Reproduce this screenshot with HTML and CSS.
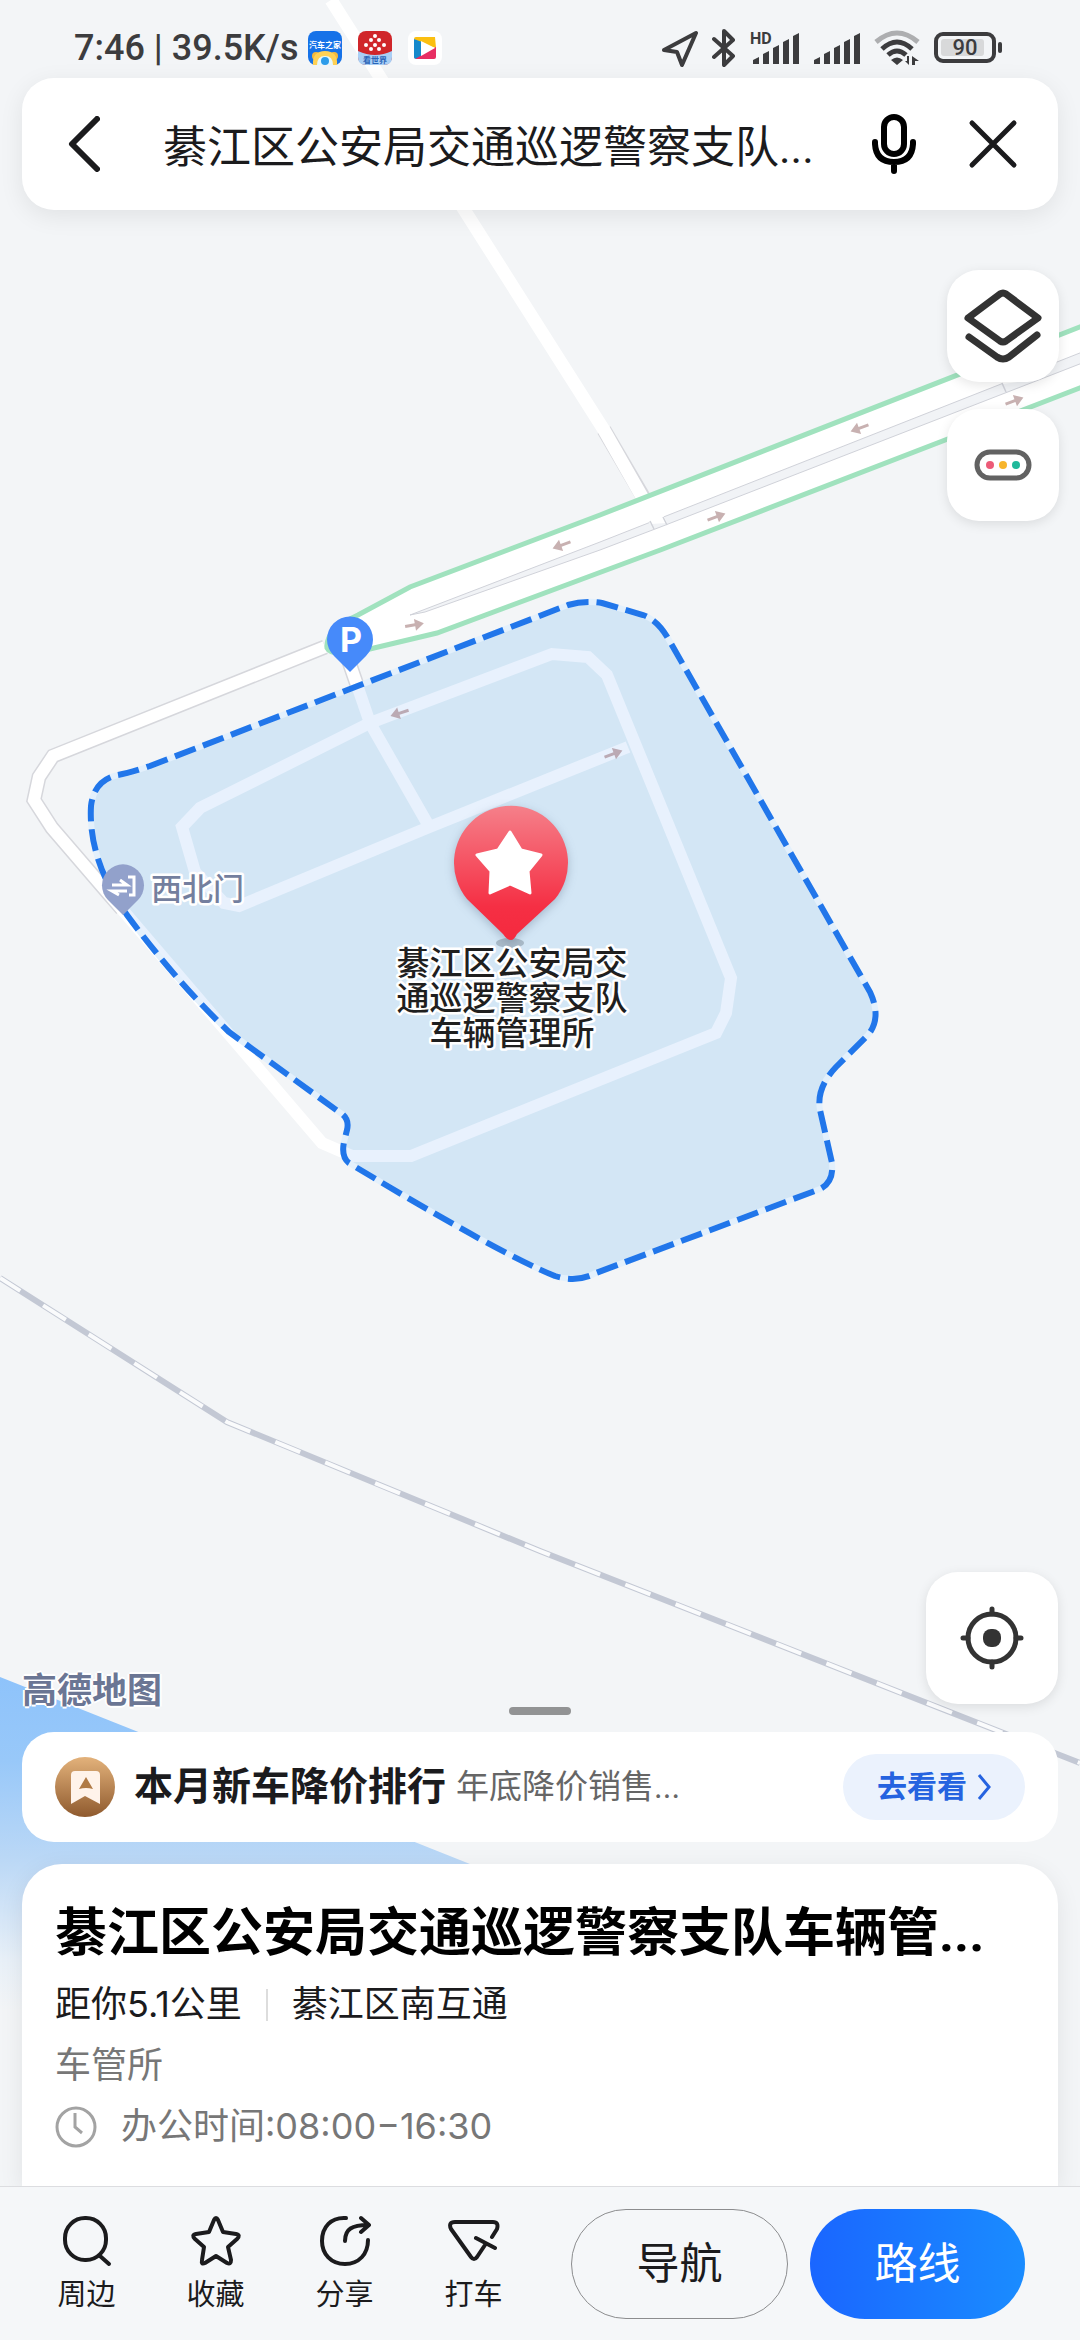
FILE: index.html
```
<!DOCTYPE html>
<html lang="zh-CN">
<head>
    <meta charset="UTF-8">
    <meta name="viewport" content="width=device-width, initial-scale=1.0">
    <title>高德地图</title>
    <link rel="stylesheet" href="styles.css">
</head>
<body>
    <svg class="map" viewBox="0 0 1080 2340" preserveAspectRatio="xMidYMin slice">
        <defs>
            <path id="area" d="M118 775 Q130 773 150 766 L568 605 Q585 600 602 603 L643 615 Q658 620 669 640 L870 992 Q882 1018 868 1035 L836 1067 Q816 1088 820 1110 L832 1163 Q834 1182 820 1189 L596 1273 Q577 1283 555 1276 Q500 1254 349 1163 Q341 1157 344 1142 L347 1130 Q350 1118 339 1112 L229 1032 Q175 980 127 915 Q88 860 91 806 Q94 780 118 775 Z"/>
            <clipPath id="areaClip"><use href="#area"/></clipPath>
            <g id="roads">
                <path d="M325 647 L53 756 L39 777 L34 800 L52 828 L108 893 L322 1143 L352 1156 L411 1156 L716 1033 L726 1013 L731 978 L607 675 L588 657 L552 654 L370 723 L200 808 L182 827 L195 872 L224 903 L239 906 L427 828 L628 747"/>
                <path d="M345 650 L370 723 L430 828"/>
            </g>
            <path id="arrow" d="M-9 -1.500 H1 V-6 L10 0 L1 6 V1.500 H-9 Z"/>
            <linearGradient id="water" x1="0" y1="1677" x2="0" y2="2010" gradientUnits="userSpaceOnUse">
                <stop offset="0" stop-color="#8ec3fb"/>
                <stop offset="0.250" stop-color="#98c8f9"/>
                <stop offset="0.550" stop-color="#bbd8f6"/>
                <stop offset="0.850" stop-color="#e8f0f8"/>
                <stop offset="1" stop-color="#f3f5f7"/>
            </linearGradient>
            <linearGradient id="pin" x1="0" y1="0" x2="0" y2="1">
                <stop offset="0" stop-color="#f5808a"/>
                <stop offset="0.750" stop-color="#f52f44"/>
                <stop offset="1" stop-color="#f5293e"/>
            </linearGradient>
        </defs>

        <path d="M0 1677 L480 1868 L600 2010 H0 Z" fill="url(#water)"/>

        <!-- minor road from the top -->
        <path class="road-line" d="M604 430 L645 500"/>
        <path d="M331 0 L604 430 L645 502" stroke="#fff" stroke-width="13" fill="none"/>

        <!-- railway -->
        <path d="M0 1278 L227 1422 L540 1551 L1080 1763" stroke="#c3c8d4" stroke-width="6" fill="none"/>
        <path class="rail-gap" d="M0 1278 L227 1422 L540 1551 L1080 1763"/>

        <path class="road-line" d="M325 647 L53 756 L39 777 L34 800 L52 828 L108 893 L122 909 M345 650 L370 723"/>
        <use href="#roads" class="road-fill"/>
        <use href="#area" fill="#d3e6f5"/>
        <g clip-path="url(#areaClip)"><use href="#roads" class="road-inner"/></g>

        <!-- main road -->
        <path class="highway" d="M1090 323 L600 515 L410 587 L358 615 Q325 630 327 648 Q332 659 374 648 L437 633 L663 549 L1090 384 Z"/>
        <path class="median" d="M410 615 L600 542 L1090 349 V360 L663 526 L600 550 L425 612 Z"/>
        <path d="M650 524 L646 513 L660 508 L667 523 Z M1003 384 L1000 375 L1030 370 L1032 380 Z" fill="#fff"/>
        <path d="M650 521 L654 529 M663 517 L667 525 M1002 383 L1006 392" stroke="#d0d2d9" stroke-width="1.500"/>

        <g fill="#c8b1b1">
            <use href="#arrow" transform="translate(716 517) rotate(-20)"/>
            <use href="#arrow" transform="translate(1014 401) rotate(-20)"/>
            <use href="#arrow" transform="translate(860 428) rotate(160)"/>
            <use href="#arrow" transform="translate(562 545) rotate(160)"/>
            <use href="#arrow" transform="translate(414 625) rotate(-10)"/>
        </g>
        <g fill="#bbaab4">
            <use href="#arrow" transform="translate(400 713) rotate(162)"/>
            <use href="#arrow" transform="translate(613 754) rotate(-20)"/>
        </g>

        <use href="#area" class="area-halo"/>
        <use href="#area" class="area-border"/>

        <!-- parking pin -->
        <path d="M350 672 L334 656 A23 23 0 1 1 366 656 Z" fill="#468afa"/>
        <text class="pin-letter" x="351" y="652">P</text>

        <!-- gate pin -->
        <path d="M123 915 L108 900 A21 21 0 1 1 138 900 Z" fill="#92a1cb"/>
        <path d="M112 885 H127 L120 880 M127 891 H112 L119 895 M128 877 H134 V895 H129" stroke="#fff" stroke-width="3" fill="none"/>
        <text class="gate-label" x="151" y="900">西北门</text>

        <!-- destination -->
        <ellipse cx="510" cy="943" rx="14" ry="5" fill="#a9bac8"/>
        <path class="dest-pin" d="M511 940 Q507 940 503 934 L467 899 A57 57 0 1 1 555 899 L517 934 Q514 940 511 940 Z" fill="url(#pin)"/>
        <path d="M510 832 L521 850 L541 855 L528 871 L530 893 L510 884 L490 893 L491 871 L477 855 L498 850 Z" fill="#fff" stroke="#fff" stroke-width="3" stroke-linejoin="round"/>
        <text class="dest-label" x="512" y="975">綦江区公安局交</text>
        <text class="dest-label" x="512" y="1010">通巡逻警察支队</text>
        <text class="dest-label" x="512" y="1045">车辆管理所</text>
    </svg>

    <div class="screen">
        <div class="status">
            <span class="status-text">7:46 | 39.5K/s</span>
            <div class="apps">
                <svg width="34" height="34" viewBox="0 0 34 34">
                    <rect width="34" height="34" rx="8" fill="#1672e8"/>
                    <text class="app-name" x="17" y="17" fill="#fff">汽车之家</text>
                    <circle cx="8" cy="25" r="4" fill="#f5b93c"/><circle cx="26" cy="25" r="4" fill="#f5b93c"/>
                    <path d="M5 34 Q4 20 17 20 Q30 20 29 34 Z" fill="#ffd155"/>
                    <path d="M9 34 Q9 25 17 25 Q25 25 25 34 Z" fill="#e5f8ff"/>
                    <circle cx="17" cy="30" r="4" fill="#2d9cea"/>
                </svg>
                <svg width="34" height="34" viewBox="0 0 34 34">
                    <rect width="34" height="34" rx="8" fill="#d0262a"/>
                    <path d="M0 20 Q17 28 34 20 V26 Q34 34 26 34 H8 Q0 34 0 26 Z" fill="#a9cff5"/>
                    <g fill="#fff"><circle cx="17" cy="5" r="2"/><circle cx="13" cy="9" r="2"/><circle cx="21" cy="9" r="2"/><circle cx="8" cy="14" r="2"/><circle cx="17" cy="14" r="2"/><circle cx="26" cy="14" r="2"/><circle cx="13" cy="18" r="2"/><circle cx="21" cy="18" r="2"/></g>
                    <text class="app-name" x="17" y="32" fill="#2b65b8">看世界</text>
                </svg>
                <svg width="34" height="34" viewBox="0 0 34 34">
                    <rect width="34" height="34" rx="8" fill="#fff"/>
                    <path d="M6 8 Q6 6 8 6 H27 L28 17 L17 14 Z" fill="#fbbf10"/>
                    <path d="M28 16 V26 Q28 28 26 28 H8 L6 26 L15 22 Z" fill="#e72e63"/>
                    <path d="M6 8 L14 11 V24 L7 28 Q6 27 6 26 Z" fill="#1689cb"/>
                    <path d="M13 10 L27 17 L13 25 Z" fill="#fff"/>
                </svg>
            </div>
            <div class="signals">
                <svg width="36" height="38" viewBox="0 0 36 38"><path d="M2 21 L34 4 L20 36 L15 23 Z" fill="none" stroke="#3c3c3e" stroke-width="4" stroke-linejoin="round"/></svg>
                <svg width="24" height="40" viewBox="0 0 24 40"><path d="M2 11 L21 28 L12 37 V3 L21 12 L2 29" fill="none" stroke="#3c3c3e" stroke-width="4" stroke-linejoin="round" stroke-linecap="round"/></svg>
                <svg width="49" height="36" viewBox="0 0 49 36">
                    <text class="hd" x="0" y="14">HD</text>
                    <path class="bars" d="M3 30 L9 27 V34 H3 Z M13 24 L19 21 V34 H13 Z M23 18 L29 15 V34 H23 Z M33 12 L39 9 V34 H33 Z M43 6 L49 3 V34 H43 Z"/>
                </svg>
                <svg width="47" height="36" viewBox="0 0 47 36"><path class="bars" d="M1 30 L7 27 V34 H1 Z M11 24 L17 21 V34 H11 Z M21 18 L27 15 V34 H21 Z M31 12 L37 9 V34 H31 Z M41 6 L47 3 V34 H41 Z"/></svg>
                <svg width="46" height="36" viewBox="0 0 46 36">
                    <g fill="none" stroke="#3c3c3e" stroke-width="5">
                        <path d="M2 12 Q23 -6 44 12" stroke="#adaeb0"/>
                        <path d="M8 19 Q23 5 38 19"/>
                        <path d="M14 25 Q23 17 32 25"/>
                    </g>
                    <path d="M17 30 Q23 25 29 30 L23 35 Z M35 26 V35 L31 31 H33 V26 Z M38 35 V26 L45 31 H41 V35 Z" fill="#3c3c3e"/>
                </svg>
                <svg width="68" height="32" viewBox="0 0 68 32">
                    <rect x="2" y="2" width="58" height="27" rx="7" fill="none" stroke="#3c3c3e" stroke-width="4"/>
                    <rect x="7" y="7" width="43" height="17" rx="3" fill="#d8d9da"/>
                    <rect x="64" y="10" width="4" height="11" rx="2" fill="#3c3c3e"/>
                    <text class="battery" x="31" y="23">90</text>
                </svg>
            </div>
        </div>

        <form class="search">
            <button type="button" class="icon-btn" aria-label="返回">
                <svg width="32" height="56" viewBox="0 0 32 56"><path d="M29 3 L4 28 L29 53" fill="none" stroke="#1b1b1d" stroke-width="6" stroke-linecap="round" stroke-linejoin="round"/></svg>
            </button>
            <input class="search-input" type="text" aria-label="搜索" value="綦江区公安局交通巡逻警察支队..." readonly>
            <button type="button" class="icon-btn mic" aria-label="语音">
                <svg width="44" height="60" viewBox="0 0 44 60">
                    <rect x="12" y="3" width="20" height="37" rx="10" fill="none" stroke="#000" stroke-width="6"/>
                    <path d="M3 28 V30 Q4 48 22 48 Q40 48 41 30 V28 M22 49 V57" fill="none" stroke="#000" stroke-width="6" stroke-linecap="round"/>
                </svg>
            </button>
            <button type="button" class="icon-btn" aria-label="关闭">
                <svg width="50" height="50" viewBox="0 0 50 50"><path d="M4 4 L46 46 M46 4 L4 46" stroke="#1b1b1d" stroke-width="5" stroke-linecap="round"/></svg>
            </button>
        </form>

        <div class="tools">
            <button class="tool" aria-label="图层">
                <svg width="80" height="74" viewBox="0 0 80 74" fill="none" stroke="#333" stroke-width="7" stroke-linecap="round" stroke-linejoin="round">
                    <path d="M5 29 L37 5 Q40 3 43 5 L75 29 L43 52 Q40 54 37 52 Z"/>
                    <path d="M6 48 L34 68 Q40 72 46 68 L74 46"/>
                </svg>
            </button>
            <button class="tool" aria-label="路况">
                <svg width="58" height="32" viewBox="0 0 58 32">
                    <rect x="3" y="3" width="52" height="26" rx="13" fill="#fff" stroke="#626262" stroke-width="5"/>
                    <circle cx="16" cy="16" r="4" fill="#ec5b78"/><circle cx="29" cy="16" r="4" fill="#f7b52c"/><circle cx="42" cy="16" r="4" fill="#20b99b"/>
                </svg>
            </button>
        </div>

        <div class="map-foot">
            <span class="brand">高德地图</span>
            <button class="locate" aria-label="定位">
                <svg width="64" height="64" viewBox="0 0 64 64">
                    <circle cx="32" cy="32" r="24" fill="none" stroke="#333" stroke-width="5"/>
                    <rect x="23" y="23" width="18" height="18" rx="8" fill="#333"/>
                    <path d="M32 3 V8 M32 56 V61 M3 32 H8 M56 32 H61" stroke="#333" stroke-width="5" stroke-linecap="round"/>
                </svg>
            </button>
        </div>
        <div class="handle"></div>

        <div class="promo">
            <svg width="61" height="61" viewBox="0 0 61 61">
                <defs>
                    <linearGradient id="gold" x1="0" y1="0" x2="0" y2="1"><stop offset="0" stop-color="#e3b27b"/><stop offset="1" stop-color="#8f5a2e"/></linearGradient>
                </defs>
                <circle cx="30" cy="30" r="30" fill="url(#gold)"/>
                <path d="M16 18 Q16 14 20 14 H41 Q45 14 45 18 V47 L30 39 L16 47 Z" fill="#fff3ea"/>
                <path d="M31 20 L38 32 Q31 30 24 32 Z" fill="#b07a45"/>
            </svg>
            <strong class="promo-title">本月新车降价排行</strong>
            <span class="promo-sub">年底降价销售...</span>
            <button class="promo-btn">去看看
                <svg width="14" height="26" viewBox="0 0 14 26"><path d="M2 1 L12 13 L2 25" fill="none" stroke="#2563e0" stroke-width="3"/></svg>
            </button>
        </div>

        <div class="detail">
            <h1 class="name">綦江区公安局交通巡逻警察支队车辆管...</h1>
            <p class="line where"><span>距你5.1公里</span><span class="sep"></span><span>綦江区南互通</span></p>
            <p class="line muted">车管所</p>
            <p class="line muted hours">
                <svg width="42" height="42" viewBox="0 0 42 42"><circle cx="21" cy="21" r="19" fill="none" stroke="#a3a3a3" stroke-width="3"/><path d="M20 7 V21 L27 27" fill="none" stroke="#a3a3a3" stroke-width="3"/></svg>
                <span>办公时间:08:00−16:30</span>
            </p>
        </div>

        <div class="actions">
            <button class="action">
                <svg class="action-icon" viewBox="0 0 52 52"><rect x="4" y="3" width="41" height="42" rx="20"/><path d="M39 41 L48 49"/></svg>
                周边
            </button>
            <button class="action">
                <svg class="action-icon" viewBox="0 0 52 52"><path d="M24 5 Q26 1 28 5 L33 17 L46 19 Q51 20 47 24 L38 32 L41 45 Q41 50 37 48 L26 41 L15 48 Q11 50 12 45 L14 32 L5 24 Q1 20 6 19 L19 17 Z"/></svg>
                收藏
            </button>
            <button class="action">
                <svg class="action-icon" viewBox="0 0 52 52"><path d="M27 3 C12 2 3 12 3 26 C3 39 12 49 26 49 C40 49 49 39 49 25 M26 26 C26 14 33 10 49 10 M42 3 L50 10 L42 17"/></svg>
                分享
            </button>
            <button class="action">
                <svg class="action-icon" viewBox="0 0 52 52"><path d="M44 22 L49 14 Q51 7 45 7 H7 Q0 7 3 14 L23 42 Q26 46 29 42 L37 30 M28 23 L47 33"/></svg>
                打车
            </button>
            <div class="main-actions">
                <button class="pill">导航</button>
                <button class="pill pill-blue">路线</button>
            </div>
        </div>
    </div>
</body>
</html>
```

FILE: styles.css
```
* {
    box-sizing: border-box;
}
body {
    margin: 0;
    font-family: Roboto, "Noto Sans CJK SC", sans-serif;
    color: #1b1b1d;
    background: #f3f5f7;
}
button {
    display: flex;
    align-items: center;
    justify-content: center;
    padding: 0;
    border: none;
    background: none;
    font-family: inherit;
    color: inherit;
}
svg {
    display: block;
    flex-shrink: 0;
}

/* map */
.map {
    position: absolute;
    top: 0;
    left: 0;
    width: 100%;
    height: 100%;
}
.road-line {
    fill: none;
    stroke: #d6d7dc;
    stroke-width: 15px;
}
.road-fill {
    fill: none;
    stroke: #fff;
    stroke-width: 12px;
}
.road-inner {
    fill: none;
    stroke: #e8f1fd;
    stroke-width: 12px;
}
.rail-gap {
    fill: none;
    stroke: #fafbfc;
    stroke-width: 4px;
    stroke-dasharray: 27 27;
    stroke-dashoffset: 3px;
}
.highway {
    fill: #fff;
    stroke: #a0e2be;
    stroke-width: 5px;
}
.median {
    fill: #f1f3f6;
    stroke: #d0d2d9;
    stroke-width: 1px;
}
.area-halo {
    fill: none;
    stroke: #e3f0fc;
    stroke-width: 6px;
}
.area-border {
    fill: none;
    stroke: #2176ea;
    stroke-width: 6px;
    stroke-dasharray: 22 8;
}
.pin-letter {
    font: bold 34px Inter, sans-serif;
    text-anchor: middle;
    fill: #fff;
}
.gate-label,
.dest-label {
    font-weight: 500;
    stroke: #fff;
    stroke-width: 5px;
    stroke-linejoin: round;
    paint-order: stroke;
}
.gate-label {
    font-size: 31px;
    fill: #747f9e;
}
.dest-label {
    font-size: 33px;
    fill: #1f1f1f;
    text-anchor: middle;
}
.dest-pin {
    filter: drop-shadow(0 3px 5px rgba(60, 80, 110, 0.3));
}

.screen {
    position: relative;
    display: flex;
    flex-direction: column;
    min-height: 100vh;
}

/* status bar */
.status {
    display: flex;
    align-items: center;
    height: 78px;
    padding: 18px 78px 0 74px;
    color: #3c3c3e;
}
.status-text {
    font-size: 36px;
    font-weight: 500;
}
.apps {
    display: flex;
    gap: 16px;
    margin-left: 10px;
}
.app-name {
    font-size: 8px;
    font-weight: bold;
    text-anchor: middle;
}
.signals {
    display: flex;
    align-items: center;
    gap: 14px;
    margin-left: auto;
}
.hd {
    font-size: 16px;
    font-weight: bold;
    fill: #3c3c3e;
}
.bars {
    fill: #3c3c3e;
}
.battery {
    font-size: 22px;
    font-weight: 500;
    text-anchor: middle;
    fill: #3c3c3e;
}

/* search */
.search {
    display: flex;
    align-items: center;
    height: 132px;
    margin: 0 22px;
    padding: 0 40px 0 46px;
    border-radius: 32px;
    background: #fff;
    box-shadow: 0 6px 24px rgba(0, 0, 0, 0.08);
}
.search-input {
    flex: 1;
    min-width: 0;
    margin: 0 40px 0 63px;
    padding: 0;
    border: none;
    outline: none;
    background: none;
    font-family: inherit;
    font-size: 44px;
    color: inherit;
    text-overflow: ellipsis;
}
.mic {
    margin-right: 52px;
}

/* floating buttons */
.tools {
    display: flex;
    flex-direction: column;
    align-items: flex-end;
    gap: 27px;
    padding: 60px 21px 0;
}
.tool,
.locate {
    border-radius: 32px;
    background: #fff;
    box-shadow: 0 3px 12px rgba(0, 0, 0, 0.1);
}
.tool {
    width: 112px;
    height: 112px;
}
.locate {
    width: 132px;
    height: 132px;
}
.map-foot {
    display: flex;
    justify-content: space-between;
    align-items: flex-end;
    margin-top: auto;
    padding: 0 22px;
}
.brand {
    font-size: 35px;
    font-weight: bold;
    line-height: 24px;
    color: #6b7694;
    text-shadow: 2px 0 #fff, -2px 0 #fff, 0 2px #fff, 0 -2px #fff;
}
.handle {
    width: 62px;
    height: 8px;
    margin: 3px auto 17px;
    border-radius: 4px;
    background: #929394;
}

/* promo */
.promo {
    display: flex;
    align-items: center;
    height: 110px;
    margin: 0 22px 22px;
    padding: 0 33px;
    border-radius: 32px;
    background: #fff;
}
.promo-title {
    margin-left: 18px;
    font-size: 39px;
    font-weight: bold;
    line-height: 44px;
}
.promo-sub {
    margin-left: 10px;
    font-size: 33px;
    line-height: 44px;
    color: #666;
}
.promo-btn {
    gap: 10px;
    width: 182px;
    height: 66px;
    margin-left: auto;
    border-radius: 33px;
    background: #ebf2fd;
    font-size: 30px;
    font-weight: bold;
    line-height: 44px;
    color: #2563e0;
}

/* place card */
.detail {
    height: 322px;
    margin: 0 22px;
    padding: 34px 33px 0;
    border-radius: 40px 40px 0 0;
    background: #fff;
    box-shadow: 0 6px 24px rgba(0, 0, 0, 0.08);
}
.name {
    margin: 0;
    font-size: 52px;
    font-weight: bold;
    line-height: 72px;
    color: #000;
}
.line {
    display: flex;
    align-items: center;
    margin: 0;
    font-family: Inter, "Noto Sans CJK SC", sans-serif;
    font-size: 36px;
    line-height: 61px;
}
.where {
    margin-top: 4px;
}
.sep {
    width: 2px;
    height: 32px;
    margin: 0 24px;
    background: #ddd;
}
.muted {
    color: #777;
}
.hours {
    gap: 24px;
}

/* bottom bar */
.actions {
    position: relative;
    display: flex;
    height: 154px;
    padding: 0 55px 0 22px;
    border-top: 1px solid #dcdde0;
    background: #f5f7f9;
}
.action {
    flex-direction: column;
    gap: 10px;
    width: 129px;
    font-size: 29px;
    line-height: 36px;
}
.action-icon {
    width: 52px;
    height: 52px;
    fill: none;
    stroke: #1b1b1d;
    stroke-width: 4px;
    stroke-linecap: round;
    stroke-linejoin: round;
}
.main-actions {
    display: flex;
    flex: 1;
    align-items: center;
    gap: 22px;
    margin-left: 33px;
}
.pill {
    flex: 1;
    height: 110px;
    border: 1px solid #8c8d8f;
    border-radius: 55px;
    font-size: 43px;
    line-height: 50px;
}
.pill-blue {
    border: none;
    background: linear-gradient(90deg, #1a66ff, #1a8cff);
    color: #fff;
}
```
